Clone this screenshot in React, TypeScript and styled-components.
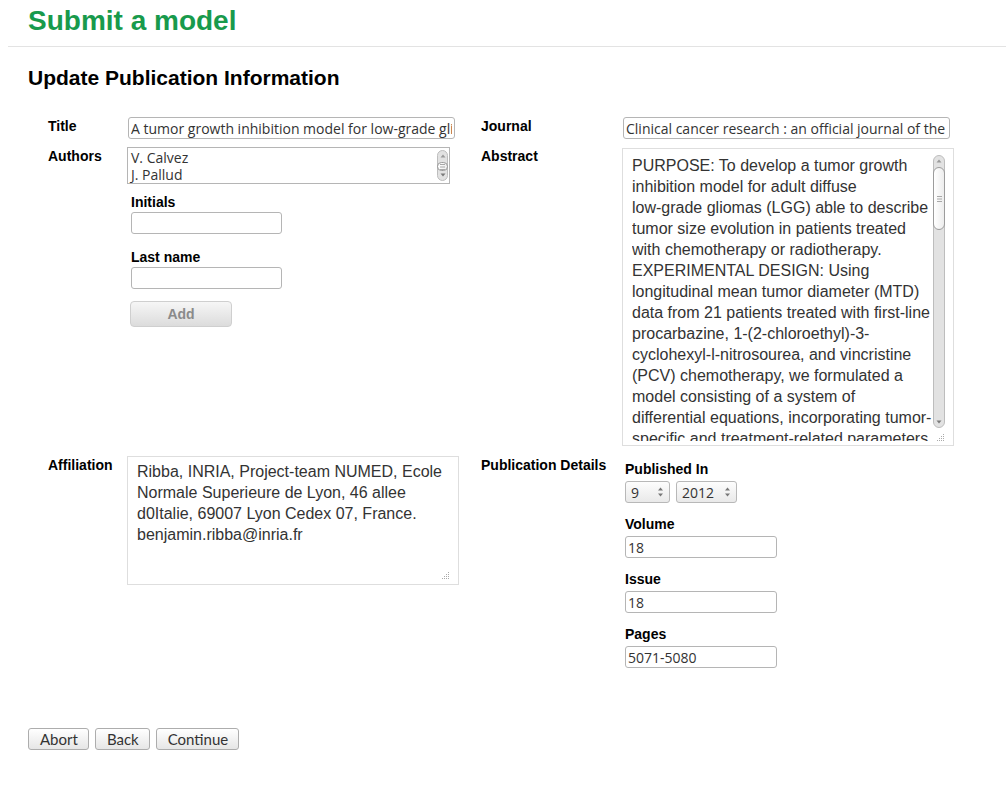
import React from "react";
import styled, { createGlobalStyle } from "styled-components";

const GlobalStyle = createGlobalStyle`
  html, body {
    margin: 0;
    padding: 0;
    background: #fff;
  }
  body {
    font-family: "Liberation Sans", Arial, sans-serif;
    color: #000;
  }
`;

const uiFont = `"Open Sans", "Lato", sans-serif`;

const Page = styled.div`
  padding-left: 8px;
  padding-bottom: 40px;
`;

const Header = styled.h1`
  margin: 0;
  padding: 4px 20px 8px;
  font-size: 28px;
  line-height: 34px;
  font-weight: bold;
  color: #189a4c;
  border-bottom: 1px solid #e3e3e3;
`;

const SubTitle = styled.h2`
  margin: 19px 0 0 20px;
  font-size: 21px;
  line-height: 24px;
  font-weight: bold;
`;

const Form = styled.div`
  display: grid;
  grid-template-columns: 79px 354px 141px 1fr;
  row-gap: 8px;
  margin: 27px 0 0 40px;
  align-items: start;
`;

const Label = styled.div`
  font-size: 14px;
  line-height: 14px;
  font-weight: bold;
  padding-top: 2px;
  white-space: nowrap;
`;

const TextInput = styled.input<{ $w: number; $ml?: number }>`
  box-sizing: border-box;
  display: block;
  width: ${(p) => p.$w}px;
  height: 22px;
  margin-left: ${(p) => p.$ml ?? 0}px;
  padding: 0 2px;
  border: 1px solid #b5b5b5;
  border-radius: 3px;
  font-family: ${uiFont};
  font-size: 14px;
  color: #333;
  background: #fff;
  outline: none;
`;

const AuthorList = styled.div`
  position: relative;
  box-sizing: border-box;
  width: 323px;
  height: 37px;
  padding: 1px 14px 1px 3px;
  border: 1px solid #b5b5b5;
  overflow-y: auto;
  background: #fff;
`;

const AuthorOption = styled.div`
  font-family: ${uiFont};
  font-size: 14px;
  line-height: 17px;
  height: 17px;
  color: #333;
  white-space: nowrap;
`;

const AuthorForm = styled.div`
  padding-left: 4px;
`;

const SmallLabel = styled.div<{ $top: number; $bottom: number }>`
  font-size: 14px;
  line-height: 16px;
  font-weight: bold;
  margin: ${(p) => p.$top}px 0 ${(p) => p.$bottom}px;
`;

const AddButton = styled.button`
  display: block;
  box-sizing: border-box;
  width: 102px;
  height: 26px;
  margin: 12px 0 0 -1px;
  border: 1px solid #cfcfcf;
  border-radius: 4px;
  background: linear-gradient(#f6f6f6, #dcdcdc);
  font-family: "Liberation Sans", Arial, sans-serif;
  font-size: 14px;
  font-weight: bold;
  color: #8a8a8a;
`;

const AreaBox = styled.div<{ $h: number; $pt: number }>`
  position: relative;
  box-sizing: border-box;
  width: 332px;
  height: ${(p) => p.$h}px;
  padding: ${(p) => p.$pt}px 8px 4px 9px;
  border: 1px solid #dedede;
  display: flex;
`;

const Area = styled.textarea<{ $pr: number }>`
  flex: 1;
  border: none;
  padding: 0 ${(p) => p.$pr}px 0 0;
  margin: 0;
  outline: none;
  resize: none;
  font-family: "Liberation Sans", Arial, sans-serif;
  font-size: 16px;
  line-height: 21px;
  color: #333;
  background: #fff;
  overflow: hidden;
`;

/* drawn scrollbar, laid over the right edge of a scrolling box */
const Track = styled.div<{ $top: number; $right: number; $h: number; $w: number }>`
  position: absolute;
  top: ${(p) => p.$top}px;
  right: ${(p) => p.$right}px;
  width: ${(p) => p.$w}px;
  height: ${(p) => p.$h}px;
  box-sizing: border-box;
  border: 1px solid #bdbdbd;
  border-radius: ${(p) => p.$w / 2}px;
  background: #e2e2e2;
`;

const Thumb = styled.div<{ $top: number; $h: number }>`
  position: absolute;
  left: -1px;
  right: -1px;
  top: ${(p) => p.$top}px;
  height: ${(p) => p.$h}px;
  box-sizing: border-box;
  border: 1px solid #9c9c9c;
  border-radius: 6px;
  background: linear-gradient(to right, #ffffff, #ededed);
  display: flex;
  align-items: center;
  justify-content: center;
`;

const Arrow = styled.svg<{ $pos: "top" | "bottom" }>`
  position: absolute;
  left: 50%;
  margin-left: -3px;
  ${(p) => (p.$pos === "top" ? "top: 3px;" : "bottom: 3px;")}
`;

const Grip = styled.svg<{ $right: number; $bottom: number }>`
  position: absolute;
  right: ${(p) => p.$right}px;
  bottom: ${(p) => p.$bottom}px;
`;

function Scrollbar({
  top,
  right,
  height,
  width,
  thumbTop,
  thumbH,
}: {
  top: number;
  right: number;
  height: number;
  width: number;
  thumbTop: number;
  thumbH: number;
}) {
  return (
    <Track $top={top} $right={right} $h={height} $w={width}>
      <Arrow $pos="top" width="6" height="4" viewBox="0 0 6 4">
        <path d="M3 0.5 L5.5 3.5 L0.5 3.5 Z" fill="#9a9a9a" />
      </Arrow>
      <Thumb $top={thumbTop} $h={thumbH}>
        <svg width="5" height="6" viewBox="0 0 5 6">
          <path d="M0 0.5 H5 M0 3 H5 M0 5.5 H5" stroke="#a8a8a8" strokeWidth="1" />
        </svg>
      </Thumb>
      <Arrow $pos="bottom" width="6" height="4" viewBox="0 0 6 4">
        <path d="M3 3.5 L5.5 0.5 L0.5 0.5 Z" fill="#7a7a7a" />
      </Arrow>
    </Track>
  );
}

function ResizeGrip({ right, bottom }: { right: number; bottom: number }) {
  const dots = [
    [6, 0],
    [6, 2],
    [4, 2],
    [6, 4],
    [4, 4],
    [2, 4],
    [6, 6],
    [4, 6],
    [2, 6],
    [0, 6],
  ];
  return (
    <Grip $right={right} $bottom={bottom} width="7" height="7" viewBox="0 0 7 7">
      {dots.map(([x, y]) => (
        <rect key={`${x}-${y}`} x={x} y={y} width="1" height="1" fill="#aaa" />
      ))}
    </Grip>
  );
}

const AbstractCell = styled.div`
  margin-top: 1px;
  margin-bottom: 2px;
`;

const DetailsCol = styled.div`
  padding-left: 3px;
`;

const SpinRow = styled.div`
  display: flex;
  gap: 6px;
`;

const SpinWrap = styled.div`
  position: relative;
  display: inline-block;
`;

const Spin = styled.select<{ $w: number }>`
  appearance: none;
  box-sizing: border-box;
  width: ${(p) => p.$w}px;
  height: 22px;
  padding: 0 0 0 5px;
  border: 1px solid #b8b8b8;
  border-radius: 3px;
  background: linear-gradient(#fdfdfd, #e9e9e9);
  font-family: ${uiFont};
  font-size: 14px;
  color: #333;
  outline: none;
`;

const SpinArrows = styled.svg`
  position: absolute;
  right: 6px;
  top: 6px;
  pointer-events: none;
`;

const Actions = styled.div`
  display: flex;
  gap: 6px;
  margin: 60px 0 0 20px;
`;

const ActionButton = styled.button`
  box-sizing: border-box;
  height: 22px;
  padding: 0 10px 0 11px;
  border: 1px solid #adadad;
  border-radius: 3px;
  background: linear-gradient(#ffffff, #e6e6e6);
  font-family: "Lato", "Open Sans", sans-serif;
  font-size: 15px;
  color: #333;
`;

const authors = ["V. Calvez", "J. Pallud"];

const abstractText =
  "PURPOSE: To develop a tumor growth inhibition model for adult diffuse\nlow-grade gliomas (LGG) able to describe tumor size evolution in patients treated with chemotherapy or radiotherapy.\nEXPERIMENTAL DESIGN: Using longitudinal mean tumor diameter (MTD) data from 21 patients treated with first-line procarbazine, 1-(2-chloroethyl)-3-cyclohexyl-l-nitrosourea, and vincristine (PCV) chemotherapy, we formulated a model consisting of a system of differential equations, incorporating tumor-specific and treatment-related parameters that reflect the response of proliferative and quiescent tumor tissue to treatment.";

const affiliationText =
  "Ribba, INRIA, Project-team NUMED, Ecole Normale Superieure de Lyon, 46 allee d0Italie, 69007 Lyon Cedex 07, France. benjamin.ribba@inria.fr";

function SpinSelect({ value, width }: { value: string; width: number }) {
  return (
    <SpinWrap>
      <Spin $w={width} defaultValue={value}>
        <option>{value}</option>
      </Spin>
      <SpinArrows width="7" height="10" viewBox="0 0 7 10">
        <path d="M3.5 0.5 L6 3.5 L1 3.5 Z" fill="#777" />
        <path d="M3.5 9.5 L6 6.5 L1 6.5 Z" fill="#777" />
      </SpinArrows>
    </SpinWrap>
  );
}

export default function App() {
  return (
    <Page>
      <GlobalStyle />
      <Header>Submit a model</Header>
      <SubTitle>Update Publication Information</SubTitle>
      <Form>
        <Label>Title</Label>
        <TextInput
          $w={327}
          $ml={1}
          readOnly
          defaultValue="A tumor growth inhibition model for low-grade glioma treated with chemotherapy or radiotherapy"
        />
        <Label>Journal</Label>
        <TextInput
          $w={327}
          $ml={1}
          readOnly
          defaultValue="Clinical cancer research : an official journal of the American Association for Cancer Research"
        />

        <Label>Authors</Label>
        <div>
          <AuthorList role="listbox">
            {authors.map((a) => (
              <AuthorOption key={a} role="option">
                {a}
              </AuthorOption>
            ))}
            <Scrollbar top={2} right={1} height={31} width={11} thumbTop={11} thumbH={9} />
          </AuthorList>
          <AuthorForm>
            <SmallLabel $top={10} $bottom={2}>Initials</SmallLabel>
            <TextInput $w={151} />
            <SmallLabel $top={15} $bottom={2}>Last name</SmallLabel>
            <TextInput $w={151} />
            <AddButton disabled>Add</AddButton>
          </AuthorForm>
        </div>
        <Label>Abstract</Label>
        <AbstractCell>
          <AreaBox $h={298} $pt={6}>
            <Area $pr={12} readOnly defaultValue={abstractText} />
            <Scrollbar top={6} right={8} height={273} width={12} thumbTop={11} thumbH={63} />
            <ResizeGrip right={9} bottom={4} />
          </AreaBox>
        </AbstractCell>

        <Label>Affiliation</Label>
        <AreaBox $h={129} $pt={4}>
          <Area $pr={0} readOnly defaultValue={affiliationText} />
          <ResizeGrip right={9} bottom={5} />
        </AreaBox>
        <Label>Publication Details</Label>
        <DetailsCol>
          <SmallLabel $top={5} $bottom={4}>Published In</SmallLabel>
          <SpinRow>
            <SpinSelect value="9" width={45} />
            <SpinSelect value="2012" width={61} />
          </SpinRow>
          <SmallLabel $top={13} $bottom={4}>Volume</SmallLabel>
          <TextInput $w={152} readOnly defaultValue="18" />
          <SmallLabel $top={13} $bottom={4}>Issue</SmallLabel>
          <TextInput $w={152} readOnly defaultValue="18" />
          <SmallLabel $top={13} $bottom={4}>Pages</SmallLabel>
          <TextInput $w={152} readOnly defaultValue="5071-5080" />
        </DetailsCol>
      </Form>
      <Actions>
        <ActionButton>Abort</ActionButton>
        <ActionButton>Back</ActionButton>
        <ActionButton>Continue</ActionButton>
      </Actions>
    </Page>
  );
}
